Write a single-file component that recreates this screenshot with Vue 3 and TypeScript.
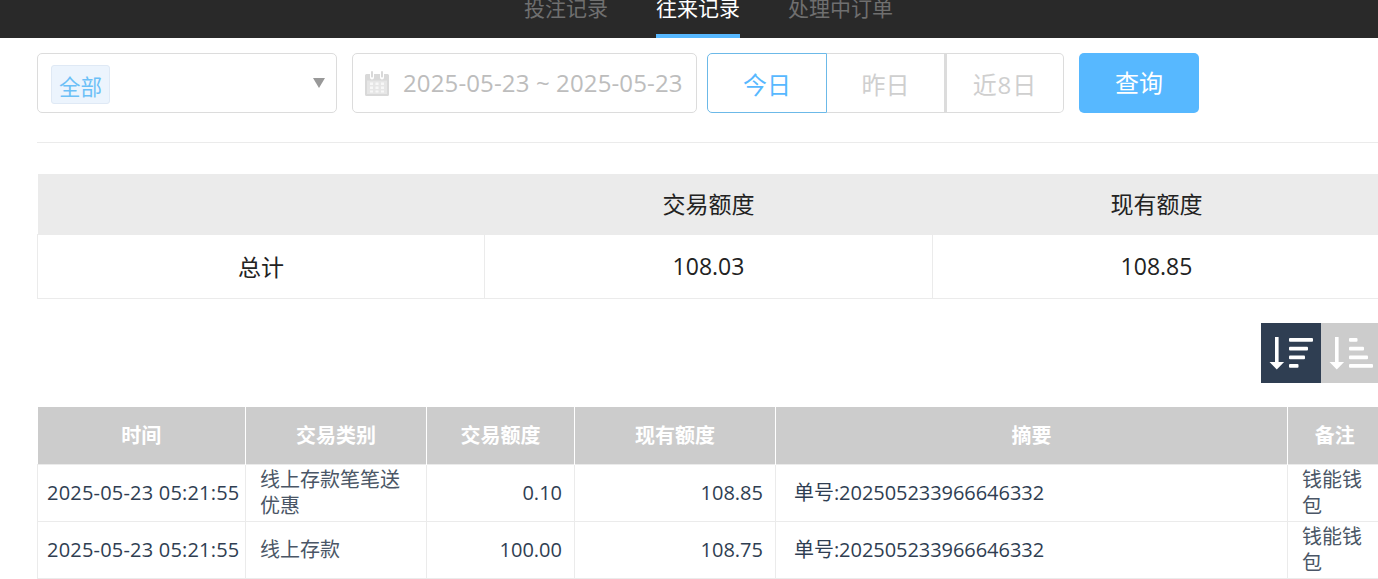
<script setup lang="ts">
import { ref } from "vue";

const tabs = ["投注记录", "往来记录", "处理中订单"];
const activeTab = ref(1);

const ranges = ["今日", "昨日", "近8日"];
const activeRange = ref(0);

const sortDesc = ref(true);

const rows = [
  {
    time: "2025-05-23 05:21:55",
    type: "线上存款笔笔送优惠",
    amount: "0.10",
    balance: "108.85",
    summary: "单号:202505233966646332",
    note: "钱能钱包"
  },
  {
    time: "2025-05-23 05:21:55",
    type: "线上存款",
    amount: "100.00",
    balance: "108.75",
    summary: "单号:202505233966646332",
    note: "钱能钱包"
  }
];
</script>

<template>
  <div class="page">
    <nav class="topbar">
      <a
        v-for="(tab, i) in tabs"
        :key="tab"
        class="tab"
        :class="{ active: i === activeTab }"
        @click="activeTab = i"
      >
        {{ tab }}
      </a>
    </nav>

    <main class="content">
      <div class="filters">
        <div class="select">
          <span class="chip">全部</span>
          <span class="caret"></span>
        </div>
        <div class="date">
          <svg class="cal" width="26" height="26" viewBox="0 0 26 26">
            <path
              fill="#d9d9d9"
              d="M2.5 4H6v3.5a2 2 0 0 0 4 0V4h6v3.5a2 2 0 0 0 4 0V4h3.5a1.5 1.5 0 0 1 1.5 1.5v19a1.5 1.5 0 0 1-1.5 1.5h-21A1.5 1.5 0 0 1 1 24.500v-19A1.500 1.500 0 0 1 2.500 4z"
            />
            <rect x="7" y="1" width="2" height="6.500" rx="1" fill="#d9d9d9" />
            <rect x="17" y="1" width="2" height="6.500" rx="1" fill="#d9d9d9" />
            <rect x="3" y="10.500" width="20" height="13.500" fill="#e6e6e6" />
            <g fill="#f7f7f7">
              <rect x="6" y="12.500" width="3" height="2.500" />
              <rect x="11.500" y="12.500" width="3" height="2.500" />
              <rect x="17" y="12.500" width="3" height="2.500" />
              <rect x="6" y="16.500" width="3" height="2.500" />
              <rect x="11.500" y="16.500" width="3" height="2.500" />
              <rect x="17" y="16.500" width="3" height="2.500" />
              <rect x="6" y="20.500" width="3" height="2" />
              <rect x="11.500" y="20.500" width="3" height="2" />
              <rect x="17" y="20.500" width="3" height="2" />
            </g>
          </svg>
          <span class="date-text">2025-05-23 ~ 2025-05-23</span>
        </div>
        <div class="ranges">
          <button
            v-for="(range, i) in ranges"
            :key="range"
            class="range"
            :class="{ active: i === activeRange }"
            @click="activeRange = i"
          >
            {{ range }}
          </button>
        </div>
        <button class="query">查询</button>
      </div>

      <table class="totals">
        <colgroup>
          <col class="t-label" />
          <col class="t-amount" />
          <col />
        </colgroup>
        <thead>
          <tr>
            <th></th>
            <th>交易额度</th>
            <th>现有额度</th>
          </tr>
        </thead>
        <tbody>
          <tr>
            <td>总计</td>
            <td>108.03</td>
            <td>108.85</td>
          </tr>
        </tbody>
      </table>

      <div class="sort">
        <button class="sort-btn" :class="{ on: sortDesc }" @click="sortDesc = true">
          <svg width="60" height="60" viewBox="0 0 60 60" fill="#fff">
            <rect x="14" y="14" width="3.6" height="26" />
            <path d="M8.5 39h14.6L15.8 46.5z" />
            <rect x="28" y="15" width="24" height="3.8" rx="1" />
            <rect x="28" y="23.7" width="19" height="3.8" rx="1" />
            <rect x="28" y="32.4" width="16" height="3.8" rx="1" />
            <rect x="28" y="41" width="9.5" height="3.8" rx="1" />
          </svg>
        </button>
        <button class="sort-btn" :class="{ on: !sortDesc }" @click="sortDesc = false">
          <svg width="60" height="60" viewBox="0 0 60 60" fill="#fff">
            <rect x="14" y="14" width="3.6" height="26" />
            <path d="M8.5 39h14.6L15.8 46.5z" />
            <rect x="28" y="15" width="8.5" height="3.8" rx="1" />
            <rect x="28" y="23.7" width="15" height="3.8" rx="1" />
            <rect x="28" y="32.4" width="19" height="3.8" rx="1" />
            <rect x="28" y="41" width="24" height="3.8" rx="1" />
          </svg>
        </button>
      </div>

      <table class="records">
        <colgroup>
          <col class="w-time" />
          <col class="w-type" />
          <col class="w-amount" />
          <col class="w-balance" />
          <col class="w-summary" />
          <col class="w-note" />
        </colgroup>
        <thead>
          <tr>
            <th>时间</th>
            <th>交易类别</th>
            <th>交易额度</th>
            <th>现有额度</th>
            <th>摘要</th>
            <th>备注</th>
          </tr>
        </thead>
        <tbody>
          <tr v-for="(row, i) in rows" :key="i">
            <td class="c-time">{{ row.time }}</td>
            <td class="c-type">{{ row.type }}</td>
            <td class="c-num">{{ row.amount }}</td>
            <td class="c-num">{{ row.balance }}</td>
            <td class="c-summary">{{ row.summary }}</td>
            <td class="c-note">{{ row.note }}</td>
          </tr>
        </tbody>
      </table>
    </main>
  </div>
</template>

<style>
html,
body {
  margin: 0;
  overflow: hidden;
  background: #fff;
}
</style>

<style scoped>
.page {
  width: 1378px;
  height: 579px;
  overflow: hidden;
  font-family: "Open Sans", "Noto Sans CJK SC", sans-serif;
  color: #2f3e52;
}

.topbar {
  height: 38px;
  background: #292929;
  display: flex;
  justify-content: center;
  align-items: flex-end;
  gap: 48px;
  padding-left: 39px;
  overflow: hidden;
}

.tab {
  flex: none;
  font-size: 21px;
  line-height: 30px;
  padding-bottom: 11px;
  border-bottom: 4px solid transparent;
  color: #6f6f6f;
  cursor: pointer;
}

.tab.active {
  color: #fff;
  border-bottom-color: #57b8ff;
}

.content {
  width: 1344px;
  margin-left: 37px;
}

.filters {
  display: flex;
  align-items: stretch;
  height: 60px;
  margin-top: 15px;
  padding-bottom: 29px;
  border-bottom: 1px solid #ebebeb;
}

.select,
.date {
  box-sizing: border-box;
  border: 1px solid #dcdcdc;
  border-radius: 5px;
  display: flex;
  align-items: center;
}

.select {
  position: relative;
  width: 300px;
  padding-left: 13px;
}

.chip {
  box-sizing: border-box;
  width: 59px;
  height: 39px;
  margin-top: 3px;
  font-size: 21.5px;
  line-height: 41px;
  text-align: center;
  color: #6cc0f7;
  background: #ecf4fd;
  border: 1px solid #dfe9f5;
  border-radius: 3px;
}

.caret {
  position: absolute;
  right: 11px;
  top: 24px;
  border-left: 6px solid transparent;
  border-right: 6px solid transparent;
  border-top: 10px solid #999;
}

.date {
  width: 345px;
  margin-left: 15px;
  padding-left: 11px;
}

.cal {
  flex: none;
}

.date-text {
  margin-left: 13px;
  padding-bottom: 2px;
  font-size: 24px;
  letter-spacing: 0.13px;
  color: #bdbdbd;
  white-space: nowrap;
}

.ranges {
  display: flex;
  margin-left: 10px;
}

.range {
  box-sizing: border-box;
  width: 119px;
  margin: 0;
  padding: 0;
  font: inherit;
  font-size: 24px;
  color: #cfcfcf;
  background: #fff;
  border: 1px solid #dcdcdc;
  border-left-width: 0;
  cursor: pointer;
}

.range:nth-child(1) {
  width: 120px;
  border-left-width: 1px;
  border-radius: 5px 0 0 5px;
}

.range:nth-child(2) {
  width: 118px;
}

.range:nth-child(3) {
  border-left: 2px solid #dcdcdc;
  border-radius: 0 5px 5px 0;
  letter-spacing: 1px;
}

.range.active {
  color: #57b8ff;
  border-color: #6cb9e8;
}

.query {
  width: 120px;
  margin: 0 0 0 15px;
  padding: 0 0 3px;
  font: inherit;
  font-size: 24px;
  color: #fff;
  background: #57b8ff;
  border: none;
  border-radius: 5px;
  cursor: pointer;
}

table {
  border-collapse: collapse;
  table-layout: fixed;
  width: 1344px;
}

.totals {
  margin-top: 31px;
  font-size: 23px;
  color: #222;
}

.t-label {
  width: 447px;
}

.t-amount {
  width: 448px;
}

.totals th {
  height: 58px;
  padding: 0 0 2px;
  font-weight: 400;
  background: #ebebeb;
}

.totals td {
  height: 61px;
  padding: 0 0 2px;
  text-align: center;
  border: 1px solid #ebebeb;
}

.sort {
  display: flex;
  justify-content: flex-end;
  margin-top: 24px;
}

.sort-btn {
  width: 60px;
  height: 60px;
  padding: 0;
  background: #ccc;
  border: none;
  cursor: pointer;
}

.sort-btn svg {
  display: block;
}

.sort-btn.on {
  background: #2f3e52;
}

.records {
  margin-top: 24px;
  font-size: 20px;
  line-height: 26px;
}

.w-time {
  width: 208px;
}

.w-type {
  width: 181px;
}

.w-amount {
  width: 148px;
}

.w-balance {
  width: 201px;
}

.w-summary {
  width: 512px;
}

.w-note {
  width: 94px;
}

.records th {
  height: 57px;
  padding: 0;
  font-size: 20px;
  font-weight: 700;
  color: #fff;
  background: #ccc;
  border-left: 1px solid #fff;
}

.records th:first-child {
  border-left: none;
}

.records td {
  height: 56px;
  padding: 0;
  border: 1px solid #ebebeb;
}

.c-time {
  padding-left: 9px !important;
  white-space: nowrap;
  letter-spacing: 0.2px;
}

.c-type {
  padding: 0 14px !important;
  color: #4a5666;
}

.c-num {
  padding-right: 12px !important;
  text-align: right;
}

.c-summary {
  padding-left: 18px !important;
  letter-spacing: -0.05px;
}

.c-note {
  padding: 0 14px !important;
  color: #4a5666;
}
</style>
